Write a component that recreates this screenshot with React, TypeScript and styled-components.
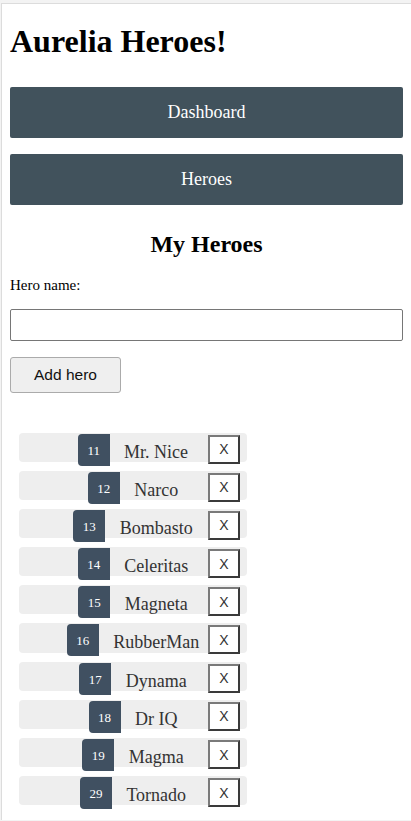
import React from "react";
import styled, { createGlobalStyle } from "styled-components";

const Global = createGlobalStyle`
  html, body { margin: 0; padding: 0; }
  body {
    background: #f3f3f3;
    padding: 3px 0 0 1px;
    font-family: "Liberation Serif", "Times New Roman", serif;
    color: #000;
  }
`;

const Frame = styled.div`
  background: #fff;
  border-top: 1px solid #dcdcdc;
  border-left: 1px solid #dcdcdc;
  min-height: calc(100vh - 4px);
  padding: 0 8px 0 8px;
  box-sizing: border-box;
  display: flex;
  flex-direction: column;
`;

const Title = styled.h1`
  font-size: 32px;
  font-weight: bold;
  margin: 19.5px 0 0 0;
  line-height: 35.4px;
`;

const Nav = styled.nav`
  display: flex;
  flex-direction: column;
  gap: 16px;
  margin-top: 28px;
`;

const NavLink = styled.a`
  display: block;
  background: #41525c;
  color: #fff;
  font-size: 18px;
  line-height: 21px;
  padding: 15px 0;
  text-align: center;
  text-decoration: none;
  border-radius: 2px;
`;

const SubTitle = styled.h2`
  font-size: 24px;
  font-weight: bold;
  text-align: center;
  line-height: 26.6px;
  margin: 26px 0 0 0;
`;

const Label = styled.label`
  display: block;
  font-size: 15px;
  line-height: 17px;
  margin-top: 19px;
`;

const NameInput = styled.input`
  display: block;
  box-sizing: border-box;
  width: 100%;
  height: 32px;
  margin-top: 15px;
  border: 1px solid #767676;
  border-radius: 2px;
  font-size: 15px;
  padding: 0 4px;
  background: #fff;
`;

const AddButton = styled.button`
  display: block;
  box-sizing: border-box;
  width: 111px;
  height: 36px;
  margin-top: 16px;
  background: #efefef;
  border: 1px solid #ababab;
  border-radius: 3px;
  font-family: "Liberation Sans", Arial, sans-serif;
  font-size: 15.5px;
  color: #111;
`;

const List = styled.ul`
  list-style: none;
  margin: 40px 0 0 9px;
  padding: 0;
  width: 228px;
  display: flex;
  flex-direction: column;
  gap: 9px;
`;

const Row = styled.li`
  display: grid;
  grid-template-columns: 1fr auto 1fr;
  align-items: start;
  height: 29.2px;
  background: #eee;
  border-radius: 4px;
`;

const Group = styled.div`
  grid-column: 2;
  display: flex;
  align-items: flex-start;
`;

const Badge = styled.span`
  display: block;
  margin-top: 1px;
  height: 22px;
  padding: 10px 9.5px 0;
  font-size: 13px;
  line-height: 13px;
  color: #fff;
  background: #405061;
  border-radius: 4px 0 0 4px;
  margin-right: 14.5px;
`;

const Name = styled.span`
  display: block;
  padding-top: 9px;
  font-size: 18px;
  line-height: 20px;
  color: #333;
  white-space: nowrap;
`;

const DeleteButton = styled.button`
  grid-column: 3;
  justify-self: end;
  box-sizing: border-box;
  width: 32px;
  height: 29px;
  margin: 2px 7px 0 0;
  padding: 0;
  background: #fff;
  border: 2px solid;
  border-color: #7a7a7a #3a3a3a #3a3a3a #7a7a7a;
  font-family: "Liberation Sans", Arial, sans-serif;
  font-size: 14px;
  color: #333;
`;

const heroes = [
  { id: 11, name: "Mr. Nice" },
  { id: 12, name: "Narco" },
  { id: 13, name: "Bombasto" },
  { id: 14, name: "Celeritas" },
  { id: 15, name: "Magneta" },
  { id: 16, name: "RubberMan" },
  { id: 17, name: "Dynama" },
  { id: 18, name: "Dr IQ" },
  { id: 19, name: "Magma" },
  { id: 29, name: "Tornado" },
];

export default function App() {
  return (
    <>
      <Global />
      <Frame>
        <Title>Aurelia Heroes!</Title>
        <Nav>
          <NavLink href="#">Dashboard</NavLink>
          <NavLink href="#">Heroes</NavLink>
        </Nav>
        <SubTitle>My Heroes</SubTitle>
        <Label htmlFor="hero-name">Hero name:</Label>
        <NameInput id="hero-name" />
        <AddButton>Add hero</AddButton>
        <List>
          {heroes.map((h) => (
            <Row key={h.id}>
              <Group>
                <Badge>{h.id}</Badge>
                <Name>{h.name}</Name>
              </Group>
              <DeleteButton>X</DeleteButton>
            </Row>
          ))}
        </List>
      </Frame>
    </>
  );
}
